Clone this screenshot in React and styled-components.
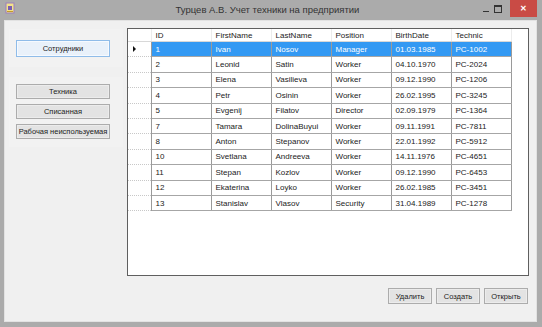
import React from 'react';
import styled, { createGlobalStyle } from 'styled-components';

const GlobalStyle = createGlobalStyle`
  html, body {
    margin: 0;
    padding: 0;
    background: #fff;
  }
  body {
    font-family: "Liberation Sans", Arial, sans-serif;
  }
`;

const Window = styled.div`
  width: 542px;
  height: 327px;
  background: #ababab;
  display: flex;
  flex-direction: column;
  box-sizing: border-box;
`;

const TitleBar = styled.div`
  height: 20px;
  display: flex;
  align-items: flex-start;
  flex-shrink: 0;
`;

const AppIcon = styled.svg`
  width: 10px;
  height: 12px;
  margin: 2px 0 0 5px;
`;

const Title = styled.div`
  flex: 1;
  text-align: center;
  font-size: 9.5px;
  line-height: 20px;
  color: #333;
  padding-left: 40px;
`;

const Controls = styled.div`
  display: flex;
  align-items: flex-start;
  margin-right: 5px;
`;

const ControlButton = styled.div`
  width: ${(p) => (p.$close ? '27px' : '12px')};
  height: 17px;
  display: flex;
  align-items: center;
  justify-content: center;
  background: ${(p) => (p.$close ? '#c94b45' : 'transparent')};
  color: ${(p) => (p.$close ? '#fff' : '#333')};
  font-size: 8px;
  font-weight: bold;
  margin-left: ${(p) => (p.$close ? '6px' : '0')};
`;

const MinDash = styled.div`
  width: 6px;
  height: 1px;
  background: #333;
  margin-top: 6px;
`;

const MaxBox = styled.div`
  width: 6px;
  height: 5px;
  border: 1px solid #333;
  border-top-width: 2px;
`;

const Client = styled.div`
  flex: 1;
  margin: 0 5px 5px 4px;
  background: #f0f0f0;
  display: flex;
  box-shadow: inset 0 0 0 1px #e2e2e2;
`;

const Sidebar = styled.div`
  width: 123px;
  flex-shrink: 0;
  display: flex;
  flex-direction: column;
  padding-top: 9px;
  box-sizing: border-box;
`;

const Group = styled.div`
  margin: 0 4px ${(p) => p.$gap || 0}px 5px;
  padding: ${(p) => p.$pad};
  background: #f2f2f2;
  display: flex;
  flex-direction: column;
  gap: 5px;
`;

const SideButton = styled.button`
  width: 94px;
  height: ${(p) => (p.$active ? '17px' : '15px')};
  margin-left: 7px;
  padding: 0;
  font-family: "Liberation Sans", Arial, sans-serif;
  font-size: 7.5px;
  color: #222;
  background: ${(p) => (p.$active ? '#e9f1fa' : '#e3e3e3')};
  border: 1px solid ${(p) => (p.$active ? '#8fbce9' : '#acacac')};
  box-shadow: inset 0 0 0 1px ${(p) => (p.$active ? '#f6faff' : '#ececec')};
`;

const Main = styled.div`
  flex: 1;
  display: flex;
  flex-direction: column;
  padding: 8px 8px 0 0;
`;

const GridBox = styled.div`
  height: 248px;
  border: 1px solid #5f5f5f;
  background: #fff;
  box-sizing: border-box;
  overflow: hidden;
`;

const Table = styled.table`
  border-collapse: collapse;
  table-layout: fixed;
  font-size: 8px;
  color: #222;
`;

const HeadCell = styled.th`
  height: 12px;
  padding: 0 0 0 4px;
  font-weight: normal;
  text-align: left;
  border-right: 1px solid #ececec;
  border-bottom: 1px solid #d8d8d8;
  white-space: nowrap;
`;

const RowHead = styled.td`
  height: 14.4px;
  padding: 0;
  border-right: 1px solid #9a9a9a;
  border-bottom: 1px dotted #c8c8c8;
  position: relative;
`;

const Arrow = styled.span`
  position: absolute;
  left: 5px;
  top: 50%;
  margin-top: -3px;
  width: 0;
  height: 0;
  border-top: 3px solid transparent;
  border-bottom: 3px solid transparent;
  border-left: 3px solid #111;
`;

const Cell = styled.td`
  height: 14.4px;
  padding: 0 0 0 4px;
  border-right: 1px solid #9a9a9a;
  border-bottom: 1px solid #a6a6a6;
  white-space: nowrap;
  overflow: hidden;
  background: ${(p) => (p.$selected ? '#3399f3' : '#fff')};
  color: ${(p) => (p.$selected ? '#fff' : '#222')};
`;

const ButtonRow = styled.div`
  display: flex;
  justify-content: flex-end;
  gap: 4px;
  margin-top: 12px;
  padding-right: 1px;
`;

const ActionButton = styled.button`
  width: 44px;
  height: 16px;
  padding: 0;
  font-family: "Liberation Sans", Arial, sans-serif;
  font-size: 7.5px;
  color: #222;
  background: #e3e3e3;
  border: 1px solid #acacac;
  box-shadow: inset 0 0 0 1px #ececec;
`;

const columns = [
  { key: 'id', title: 'ID' },
  { key: 'first', title: 'FirstName' },
  { key: 'last', title: 'LastName' },
  { key: 'pos', title: 'Position' },
  { key: 'birth', title: 'BirthDate' },
  { key: 'tech', title: 'Technic' },
];

const rows = [
  { id: 1, first: 'Ivan', last: 'Nosov', pos: 'Manager', birth: '01.03.1985', tech: 'PC-1002' },
  { id: 2, first: 'Leonid', last: 'Satin', pos: 'Worker', birth: '04.10.1970', tech: 'PC-2024' },
  { id: 3, first: 'Elena', last: 'Vasilieva', pos: 'Worker', birth: '09.12.1990', tech: 'PC-1206' },
  { id: 4, first: 'Petr', last: 'Osinin', pos: 'Worker', birth: '26.02.1995', tech: 'PC-3245' },
  { id: 5, first: 'Evgenij', last: 'Filatov', pos: 'Director', birth: '02.09.1979', tech: 'PC-1364' },
  { id: 7, first: 'Tamara', last: 'DolinaBuyui', pos: 'Worker', birth: '09.11.1991', tech: 'PC-7811' },
  { id: 8, first: 'Anton', last: 'Stepanov', pos: 'Worker', birth: '22.01.1992', tech: 'PC-5912' },
  { id: 10, first: 'Svetlana', last: 'Andreeva', pos: 'Worker', birth: '14.11.1976', tech: 'PC-4651' },
  { id: 11, first: 'Stepan', last: 'Kozlov', pos: 'Worker', birth: '09.12.1990', tech: 'PC-6453' },
  { id: 12, first: 'Ekaterina', last: 'Loyko', pos: 'Worker', birth: '26.02.1985', tech: 'PC-3451' },
  { id: 13, first: 'Stanislav', last: 'Vlasov', pos: 'Security', birth: '31.04.1989', tech: 'PC-1278' },
];

export default function App() {
  return (
    <>
      <GlobalStyle />
      <Window>
        <TitleBar>
          <AppIcon viewBox="0 0 10 12">
            <rect x="1" y="1" width="8" height="10" fill="#f3e38a" stroke="#9b7fbf" strokeWidth="1" />
            <rect x="3" y="4" width="4" height="4" fill="#7a5fb0" />
            <rect x="2" y="9" width="6" height="1" fill="#c49a2c" />
          </AppIcon>
          <Title>Турцев А.В. Учет техники на предприятии</Title>
          <Controls>
            <ControlButton><MinDash /></ControlButton>
            <ControlButton><MaxBox /></ControlButton>
            <ControlButton $close>✕</ControlButton>
          </Controls>
        </TitleBar>
        <Client>
          <Sidebar>
            <Group $pad="11px 0 10px" $gap={10}>
              <SideButton $active>Сотрудники</SideButton>
            </Group>
            <Group $pad="7px 0 8px">
              <SideButton>Техника</SideButton>
              <SideButton>Списанная</SideButton>
              <SideButton>Рабочая неиспользуемая</SideButton>
            </Group>
          </Sidebar>
          <Main>
            <GridBox>
              <Table>
                <colgroup>
                  <col style={{ width: 23 }} />
                  {columns.map((c) => (
                    <col key={c.key} style={{ width: 60 }} />
                  ))}
                </colgroup>
                <thead>
                  <tr>
                    <HeadCell />
                    {columns.map((c) => (
                      <HeadCell key={c.key}>{c.title}</HeadCell>
                    ))}
                  </tr>
                </thead>
                <tbody>
                  {rows.map((r, i) => (
                    <tr key={r.id}>
                      <RowHead>{i === 0 && <Arrow />}</RowHead>
                      {columns.map((c) => (
                        <Cell key={c.key} $selected={i === 0}>{r[c.key]}</Cell>
                      ))}
                    </tr>
                  ))}
                </tbody>
              </Table>
            </GridBox>
            <ButtonRow>
              <ActionButton>Удалить</ActionButton>
              <ActionButton>Создать</ActionButton>
              <ActionButton>Открыть</ActionButton>
            </ButtonRow>
          </Main>
        </Client>
      </Window>
    </>
  );
}
